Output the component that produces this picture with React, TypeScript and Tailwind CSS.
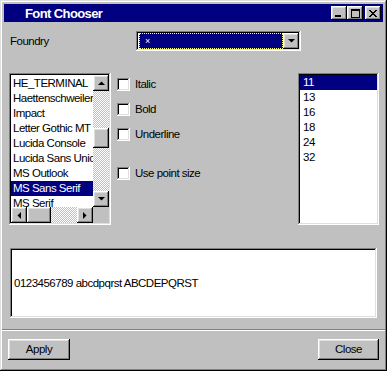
import React from "react"

const raised = "shadow-[inset_-1px_-1px_#000,inset_1px_1px_#fff,inset_-2px_-2px_#808080,inset_2px_2px_#dfdfdf]"
const sunken = "shadow-[inset_-1px_-1px_#fff,inset_1px_1px_#808080,inset_-2px_-2px_#dfdfdf,inset_2px_2px_#000]"
const checker = "bg-[image:repeating-conic-gradient(#c0c0c0_0%_25%,#ffffff_0%_50%)] bg-[length:2px_2px]"

function Arrow({ dir }: { dir: "up" | "down" | "left" | "right" }) {
  const pts = {
    up: "0,4 7,4 3.5,0.5",
    down: "0,0 7,0 3.5,3.5",
    left: "4,0 4,7 0.5,3.5",
    right: "0,0 0,7 3.5,3.5",
  }[dir]
  const vertical = dir === "up" || dir === "down"
  return (
    <svg width={vertical ? 7 : 4} height={vertical ? 4 : 7} viewBox={vertical ? "0 0 7 4" : "0 0 4 7"}>
      <polygon points={pts} fill="#000" />
    </svg>
  )
}

function ArrowBtn({ dir }: { dir: "up" | "down" | "left" | "right" }) {
  return (
    <div className={`w-[16px] h-[16px] shrink-0 bg-[#c0c0c0] flex items-center justify-center ${raised}`}>
      <Arrow dir={dir} />
    </div>
  )
}

function Pixels({ rows, w, h }: { rows: string[]; w: number; h: number }) {
  return (
    <svg width={w} height={h} viewBox={`0 0 ${w} ${h}`} shapeRendering="crispEdges">
      {rows.map((r, y) =>
        r.split("").map((c, x) => (c === "x" ? <rect key={`${x}-${y}`} x={x} y={y} width={1} height={1} fill="#000" /> : null))
      )}
    </svg>
  )
}

function TitleBtn({ kind }: { kind: "min" | "max" | "close" }) {
  const glyphs = {
    min: ["........", "........", "........", "........", "........", "........", "xxxxxx..", "xxxxxx.."],
    max: ["xxxxxxxxx", "xxxxxxxxx", "x.......x", "x.......x", "x.......x", "x.......x", "x.......x", "x.......x", "xxxxxxxxx"],
    close: ["xx....xx", ".xx..xx.", "..xxxx..", "...xx...", "..xxxx..", ".xx..xx.", "xx....xx"],
  }[kind]
  return (
    <div className={`w-[16px] h-[14px] bg-[#c0c0c0] flex items-center justify-center ${raised} ${kind === "close" ? "ml-[2px]" : ""}`}>
      <Pixels rows={glyphs} w={glyphs[0].length} h={glyphs.length} />
    </div>
  )
}

function Check({ label, className = "" }: { label: string; className?: string }) {
  return (
    <div className={`flex items-center h-[13px] ${className}`}>
      <div className={`w-[13px] h-[13px] bg-white ${sunken}`} />
      <span className="ml-[5px] whitespace-nowrap">{label}</span>
    </div>
  )
}

const fonts = ["HE_TERMINAL", "Haettenschweiler", "Impact", "Letter Gothic MT", "Lucida Console", "Lucida Sans Unicode", "MS Outlook", "MS Sans Serif", "MS Serif"]
const sizes = ["11", "13", "16", "18", "24", "32"]

export default function App() {
  return (
    <div className="w-[387px] h-[371px] bg-[#c0c0c0] p-[4px] flex flex-col text-black text-[11.5px] leading-[15px] tracking-[-0.5px] font-['Liberation_Sans',Arial,sans-serif] shadow-[inset_-1px_-1px_#000,inset_1px_1px_#dfdfdf,inset_-2px_-2px_#808080,inset_2px_2px_#fff]">
      {/* Title bar */}
      <div className="h-[18px] bg-[#000080] flex items-center shrink-0">
        <span className="ml-[21px] text-white font-bold text-[13px] tracking-[-0.6px]">Font Chooser</span>
        <div className="ml-auto mr-[2px] flex items-center">
          <TitleBtn kind="min" />
          <TitleBtn kind="max" />
          <TitleBtn kind="close" />
        </div>
      </div>

      {/* Foundry */}
      <div className="flex items-center mt-[9px] h-[20px] shrink-0">
        <span className="ml-[6px] w-[126px]">Foundry</span>
        <div className={`w-[165px] h-[20px] p-[2px] bg-white flex ${sunken}`}>
          <div className="flex-1 ml-[1px] bg-[#000080] border border-dotted border-[#ffff80] flex items-center">
            <span className="ml-[5px] text-white text-[9px] leading-[9px]">×</span>
          </div>
          <ArrowBtn dir="down" />
        </div>
      </div>

      {/* Lists + options */}
      <div className="flex mt-[22px] shrink-0">
        <div className={`ml-[5px] w-[102px] h-[152px] p-[2px] bg-[#c0c0c0] ${sunken}`}>
          <div className="grid grid-cols-[82px_16px] grid-rows-[132px_16px] h-full">
            <div className="bg-white overflow-hidden pt-[1px]">
              {fonts.map((f) => (
                <div key={f} className={`h-[15px] pl-[2px] whitespace-nowrap ${f === "MS Sans Serif" ? "bg-[#000080] text-white" : ""}`}>
                  {f}
                </div>
              ))}
            </div>
            <div className={`flex flex-col ${checker}`}>
              <ArrowBtn dir="up" />
              <div className="flex-1">
                <div className={`mt-[37px] h-[20px] bg-[#c0c0c0] ${raised}`} />
              </div>
              <ArrowBtn dir="down" />
            </div>
            <div className={`flex ${checker}`}>
              <ArrowBtn dir="left" />
              <div className="flex-1">
                <div className={`w-[24px] h-full bg-[#c0c0c0] ${raised}`} />
              </div>
              <ArrowBtn dir="right" />
            </div>
            <div className="bg-[#c0c0c0]" />
          </div>
        </div>

        <div className="ml-[6px] pt-[5px] flex flex-col">
          <Check label="Italic" />
          <Check label="Bold" className="mt-[12px]" />
          <Check label="Underline" className="mt-[12px]" />
          <Check label="Use point size" className="mt-[26px]" />
        </div>

        <div className={`ml-auto mr-[4px] w-[81px] h-[152px] p-[2px] bg-white ${sunken}`}>
          {sizes.map((s) => (
            <div key={s} className={`h-[15px] pl-[3px] ${s === "11" ? "bg-[#000080] text-white" : ""}`}>
              {s}
            </div>
          ))}
        </div>
      </div>

      {/* Preview */}
      <div className={`mt-[23px] mx-[6px] h-[70px] bg-white flex items-center pl-[4px] shrink-0 ${sunken}`}>
        0123456789 abcdpqrst ABCDEPQRST
      </div>

      {/* Separator */}
      <div className="mt-[11px] -mx-[2px] h-[2px] border-t border-t-[#808080] border-b border-b-white shrink-0" />

      {/* Buttons */}
      <div className="flex mt-[8px] shrink-0">
        <button className={`ml-[4px] w-[62px] h-[21px] bg-[#c0c0c0] ${raised}`}>Apply</button>
        <button className={`ml-auto mr-[4px] w-[61px] h-[21px] bg-[#c0c0c0] ${raised}`}>Close</button>
      </div>
    </div>
  )
}
